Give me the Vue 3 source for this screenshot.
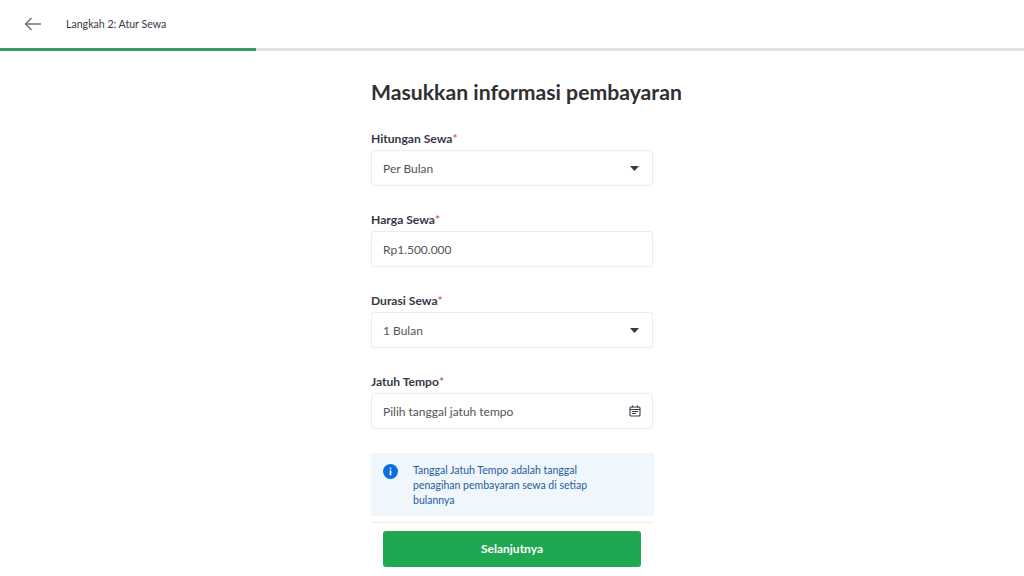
<script setup>
const fields = [
  { label: 'Hitungan Sewa', value: 'Per Bulan', icon: 'caret' },
  { label: 'Harga Sewa', value: 'Rp1.500.000', icon: '' },
  { label: 'Durasi Sewa', value: '1 Bulan', icon: 'caret' },
  { label: 'Jatuh Tempo', value: 'Pilih tanggal jatuh tempo', icon: 'calendar' }
]
</script>

<template>
  <div class="page">
    <header class="topbar">
      <svg class="back" width="18" height="14" viewBox="0 0 18 14" fill="none" stroke="#777" stroke-width="1.5">
        <path d="M17 7H1.500M7.500 1L1.500 7l6 6" />
      </svg>
      <span class="step">Langkah 2: Atur Sewa</span>
    </header>
    <div class="progress"><div class="progress-fill"></div></div>

    <main class="form">
      <h1 class="title">Masukkan informasi pembayaran</h1>
      <div v-for="f in fields" :key="f.label" class="field">
        <div class="label">{{ f.label }}<span class="req">*</span></div>
        <div class="input">
          <span>{{ f.value }}</span>
          <svg v-if="f.icon === 'caret'" width="9" height="5" viewBox="0 0 9 5"><path d="M0 0h9L4.500 5z" fill="#383746" /></svg>
          <svg v-if="f.icon === 'calendar'" class="cal" width="12" height="12" viewBox="0 0 12 12" fill="none" stroke="#383746" stroke-width="1.100">
            <rect x="1" y="2" width="10" height="9" rx="1" />
            <path d="M1 4.500h10M3.500 .5v2M8.500 .5v2" />
            <path d="M3 6.500h6M3 8.500h4" stroke-width="1" />
          </svg>
        </div>
      </div>
      <div class="info">
        <svg class="info-icon" width="15" height="15" viewBox="0 0 15 15">
          <circle cx="7.500" cy="7.500" r="7.500" fill="#0a6fdc" />
          <rect x="6.700" y="6.300" width="1.600" height="5" fill="#fff" />
          <rect x="6.700" y="3.600" width="1.600" height="1.600" fill="#fff" />
        </svg>
        <p class="info-text">Tanggal Jatuh Tempo adalah tanggal penagihan pembayaran sewa di setiap bulannya</p>
      </div>
      <div class="divider"></div>
      <div class="actions">
        <button class="next">Selanjutnya</button>
      </div>
    </main>
  </div>
</template>

<style>
html, body { margin: 0; background: #fff; overflow: hidden; }
</style>

<style scoped>
.page {
  width: 1024px;
  height: 576px;
  overflow: hidden;
  font-family: Lato, "Open Sans", sans-serif;
  color: #383746;
}
.topbar {
  height: 48px;
  display: flex;
  align-items: center;
  padding-left: 24px;
}
.back { flex: none; }
.step {
  margin: 0 0 1px 24px;
  font-size: 10.600px;
  color: #383746;
}
.progress {
  height: 3px;
  background: #e4e4e4;
}
.progress-fill {
  width: 256px;
  height: 100%;
  background: #2f9d5f;
}
.form {
  width: 283px;
  margin-left: 371px;
}
.title {
  margin: 27px 0 25px;
  font-size: 21.200px;
  line-height: 28px;
  font-weight: 700;
  color: #303030;
  white-space: nowrap;
}
.field + .field {
  margin-top: 26px;
}
.label {
  font-size: 12.100px;
  line-height: 16px;
  font-weight: 700;
  color: #383746;
  margin-bottom: 3px;
}
.req { color: #d5384c; font-weight: 400; }
.input {
  box-sizing: border-box;
  width: 282px;
  height: 36px;
  border: 1px solid #ececec;
  border-radius: 3px;
  display: flex;
  align-items: center;
  justify-content: space-between;
  padding: 0 13px 0 11px;
  font-size: 12px;
  color: #555;
}
.cal { margin-right: -2px; }
.info {
  height: 63px;
  box-sizing: border-box;
  margin-top: 24px;
  background: #eff6fc;
  display: flex;
  padding: 10px 12px;
}
.info-icon { flex: none; margin-top: 1px; }
.info-text {
  margin: 0 0 0 15px;
  width: 190px;
  font-size: 10.500px;
  line-height: 15px;
  color: #1f5c99;
}
.divider {
  height: 1px;
  margin-top: 6px;
  background: #ececec;
}
.actions {
  padding: 8px 12px 0;
}
.next {
  display: block;
  width: 258px;
  height: 36px;
  border: 0;
  border-radius: 3px;
  padding: 0 0 2px;
  background: #1fa752;
  color: #fff;
  font-family: inherit;
  font-size: 12px;
  font-weight: 700;
}
</style>
